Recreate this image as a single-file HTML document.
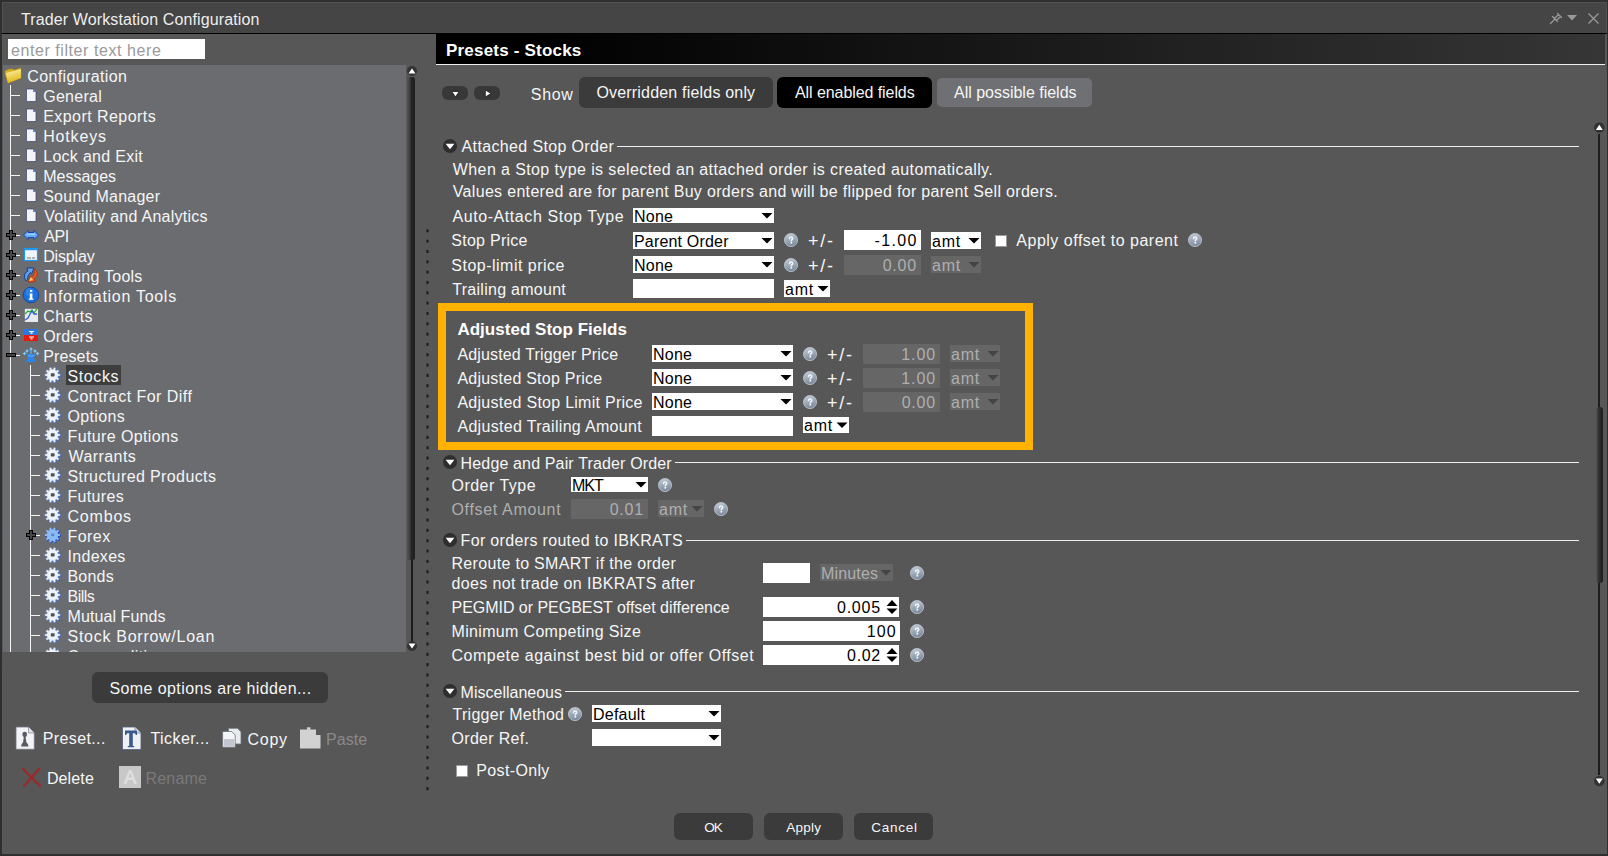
<!DOCTYPE html>
<html><head><meta charset="utf-8"><title>Trader Workstation Configuration</title>
<style>
html,body{margin:0;padding:0;width:1608px;height:856px;overflow:hidden;background:#2f2f2f}
body>div,body>svg{position:absolute}
.t{position:absolute;white-space:pre;font-family:"Liberation Sans",sans-serif;font-size:16px;line-height:20px}
svg{overflow:visible}
</style></head><body>
<div style="left:0px;top:0px;width:1608px;height:856px;background:#2f2f2f"></div>
<div style="left:2px;top:2px;width:1605px;height:852px;background:#575757;border-left:1px solid #5a5a5a;box-sizing:border-box"></div>
<div style="left:2px;top:2px;width:1605px;height:31px;background:#454545;border-top:1px solid #525252;border-left:1px solid #525252;border-right:1px solid #525252;box-sizing:border-box"></div>
<div style="left:2px;top:33px;width:1605px;height:1px;background:#000"></div>
<svg style="left:1545px;top:8px" width="60" height="22" viewBox="1545 8 60 22"><g stroke="#9a9a9a" stroke-width="1.3" fill="none" stroke-linecap="round"><line x1="1550.5" y1="23.5" x2="1555" y2="19"/><path d="M1552.5 16.5 L1557.5 21.5 M1554.5 18.5 L1558.5 14.5 M1556.5 20.5 L1560.5 16.5 M1557.5 13.5 L1561.5 17.5"/></g><path d="M1567 15 L1577 15 L1572 20.5 Z" fill="#9a9a9a"/><g stroke="#9a9a9a" stroke-width="1.2"><line x1="1588.5" y1="13.5" x2="1598.5" y2="23.5"/><line x1="1598.5" y1="13.5" x2="1588.5" y2="23.5"/></g></svg>
<div style="left:8px;top:39px;width:197px;height:20px;background:#fff"></div>
<div style="left:3px;top:65px;width:403px;height:587px;background:#6b6c70"></div>
<div style="left:10px;top:85px;width:1px;height:567px;background:#f4f4f4"></div>
<div style="left:30px;top:365px;width:1px;height:287px;background:#f4f4f4"></div>
<div style="left:10px;top:95px;width:10px;height:1px;background:#f4f4f4"></div>
<div style="left:10px;top:115px;width:10px;height:1px;background:#f4f4f4"></div>
<div style="left:10px;top:135px;width:10px;height:1px;background:#f4f4f4"></div>
<div style="left:10px;top:155px;width:10px;height:1px;background:#f4f4f4"></div>
<div style="left:10px;top:175px;width:10px;height:1px;background:#f4f4f4"></div>
<div style="left:10px;top:195px;width:10px;height:1px;background:#f4f4f4"></div>
<div style="left:10px;top:215px;width:10px;height:1px;background:#f4f4f4"></div>
<div style="left:10px;top:235px;width:10px;height:1px;background:#f4f4f4"></div>
<div style="left:10px;top:255px;width:10px;height:1px;background:#f4f4f4"></div>
<div style="left:10px;top:275px;width:10px;height:1px;background:#f4f4f4"></div>
<div style="left:10px;top:295px;width:10px;height:1px;background:#f4f4f4"></div>
<div style="left:10px;top:315px;width:10px;height:1px;background:#f4f4f4"></div>
<div style="left:10px;top:335px;width:10px;height:1px;background:#f4f4f4"></div>
<div style="left:10px;top:355px;width:10px;height:1px;background:#f4f4f4"></div>
<div style="left:30px;top:375px;width:10px;height:1px;background:#f4f4f4"></div>
<div style="left:66px;top:365px;width:55px;height:20px;background:#3d3d3d"></div>
<div style="left:30px;top:395px;width:10px;height:1px;background:#f4f4f4"></div>
<div style="left:30px;top:415px;width:10px;height:1px;background:#f4f4f4"></div>
<div style="left:30px;top:435px;width:10px;height:1px;background:#f4f4f4"></div>
<div style="left:30px;top:455px;width:10px;height:1px;background:#f4f4f4"></div>
<div style="left:30px;top:475px;width:10px;height:1px;background:#f4f4f4"></div>
<div style="left:30px;top:495px;width:10px;height:1px;background:#f4f4f4"></div>
<div style="left:30px;top:515px;width:10px;height:1px;background:#f4f4f4"></div>
<div style="left:30px;top:535px;width:10px;height:1px;background:#f4f4f4"></div>
<div style="left:30px;top:555px;width:10px;height:1px;background:#f4f4f4"></div>
<div style="left:30px;top:575px;width:10px;height:1px;background:#f4f4f4"></div>
<div style="left:30px;top:595px;width:10px;height:1px;background:#f4f4f4"></div>
<div style="left:30px;top:615px;width:10px;height:1px;background:#f4f4f4"></div>
<div style="left:30px;top:635px;width:10px;height:1px;background:#f4f4f4"></div>
<div style="left:30px;top:655px;width:10px;height:1px;background:#f4f4f4"></div>
<svg style="left:0;top:0" width="440" height="660" viewBox="0 0 440 660"><defs><clipPath id="tc"><rect x="2" y="65" width="404" height="587"/></clipPath></defs><g clip-path="url(#tc)"><defs><linearGradient id="fg" x1="0" y1="0" x2="0.3" y2="1"><stop offset="0" stop-color="#fff6b0"/><stop offset="1" stop-color="#e0b818"/></linearGradient></defs><path d="M5 71 L9 69 L13 69 L14 70 L21 68 L21 78 L8 83 L5 74 Z" fill="#d8b020" stroke="#a88a10" stroke-width="0.6"/><path d="M6 73 L21 69 L21 78 L8 83 Z" fill="url(#fg)"/><path d="M26.5 89 L33 89 L36 92 L36 101.5 L26.5 101.5 Z" fill="#f2f6fb" stroke="#3a4070" stroke-width="0.7"/><path d="M33 89 L33 92 L36 92 Z" fill="#6a90d0"/><path d="M26.5 109 L33 109 L36 112 L36 121.5 L26.5 121.5 Z" fill="#f2f6fb" stroke="#3a4070" stroke-width="0.7"/><path d="M33 109 L33 112 L36 112 Z" fill="#6a90d0"/><path d="M26.5 129 L33 129 L36 132 L36 141.5 L26.5 141.5 Z" fill="#f2f6fb" stroke="#3a4070" stroke-width="0.7"/><path d="M33 129 L33 132 L36 132 Z" fill="#6a90d0"/><path d="M26.5 149 L33 149 L36 152 L36 161.5 L26.5 161.5 Z" fill="#f2f6fb" stroke="#3a4070" stroke-width="0.7"/><path d="M33 149 L33 152 L36 152 Z" fill="#6a90d0"/><path d="M26.5 169 L33 169 L36 172 L36 181.5 L26.5 181.5 Z" fill="#f2f6fb" stroke="#3a4070" stroke-width="0.7"/><path d="M33 169 L33 172 L36 172 Z" fill="#6a90d0"/><path d="M26.5 189 L33 189 L36 192 L36 201.5 L26.5 201.5 Z" fill="#f2f6fb" stroke="#3a4070" stroke-width="0.7"/><path d="M33 189 L33 192 L36 192 Z" fill="#6a90d0"/><path d="M26.5 209 L33 209 L36 212 L36 221.5 L26.5 221.5 Z" fill="#f2f6fb" stroke="#3a4070" stroke-width="0.7"/><path d="M33 209 L33 212 L36 212 Z" fill="#6a90d0"/><g shape-rendering="crispEdges"><rect x="9" y="230" width="4" height="10" fill="#000"/><rect x="6" y="233" width="10" height="4" fill="#000"/><rect x="10" y="231" width="2" height="8" fill="#464646"/><rect x="7" y="234" width="8" height="2" fill="#464646"/></g><path d="M23.5 235 L28 230.5 L28 232.5 L34 232.5 L34 230.5 L38.5 235 L34 239.5 L34 237.5 L28 237.5 L28 239.5 Z" fill="#6aaef2" stroke="#1444b8" stroke-width="1"/><rect x="27" y="233.5" width="8" height="1.2" fill="#a8d4ff"/><g shape-rendering="crispEdges"><rect x="9" y="250" width="4" height="10" fill="#000"/><rect x="6" y="253" width="10" height="4" fill="#000"/><rect x="10" y="251" width="2" height="8" fill="#464646"/><rect x="7" y="254" width="8" height="2" fill="#464646"/></g><rect x="24.5" y="248.5" width="13" height="12" fill="#f0f3fa" stroke="#1e98f0" stroke-width="1.2"/><rect x="24" y="248" width="14" height="2.2" fill="#1e98f0"/><path d="M27 258 H31 M32 258 H35" stroke="#666" stroke-width="0.9"/><g shape-rendering="crispEdges"><rect x="9" y="270" width="4" height="10" fill="#000"/><rect x="6" y="273" width="10" height="4" fill="#000"/><rect x="10" y="271" width="2" height="8" fill="#464646"/><rect x="7" y="274" width="8" height="2" fill="#464646"/></g><path d="M26 281 Q22 274 28 271 L27 268 L34 268 L31.5 274 L30.5 272.5 Q27 275 27.5 280 Z" fill="#5aa4f0" stroke="#10389a" stroke-width="0.9"/><path d="M35 269 Q40 275 34 278.5 L35.5 281.5 L28 282 L30.5 276 L32 277.2 Q35.5 275 34 269.5 Z" fill="#f25a18" stroke="#b02a00" stroke-width="0.7"/><path d="M29 281 L31 277 L33 280 Z" fill="#ffd070"/><g shape-rendering="crispEdges"><rect x="9" y="290" width="4" height="10" fill="#000"/><rect x="6" y="293" width="10" height="4" fill="#000"/><rect x="10" y="291" width="2" height="8" fill="#464646"/><rect x="7" y="294" width="8" height="2" fill="#464646"/></g><circle cx="31" cy="295" r="7.8" fill="#1a70e0" stroke="#0a3a90" stroke-width="0.7"/><circle cx="29.5" cy="292" r="4" fill="#3a8ef0" opacity="0.6"/><rect x="29.8" y="293.5" width="2.6" height="6" fill="#fff"/><rect x="28.8" y="298.5" width="4.6" height="1.3" fill="#fff"/><rect x="30" y="290" width="2.2" height="1.8" fill="#fff"/><g shape-rendering="crispEdges"><rect x="9" y="310" width="4" height="10" fill="#000"/><rect x="6" y="313" width="10" height="4" fill="#000"/><rect x="10" y="311" width="2" height="8" fill="#464646"/><rect x="7" y="314" width="8" height="2" fill="#464646"/></g><rect x="24.3" y="308.3" width="14" height="14" fill="#e6e8f2" stroke="#555" stroke-width="0.6"/><path d="M25 314 L28 311 L30 312 L32 310 L34 313 L37 309" stroke="#30b030" stroke-width="1.3" fill="none"/><path d="M25 320 L28 318 L30 314 L32 311 L34 314 L37 314" stroke="#2a60d0" stroke-width="1.3" fill="none"/><g shape-rendering="crispEdges"><rect x="9" y="330" width="4" height="10" fill="#000"/><rect x="6" y="333" width="10" height="4" fill="#000"/><rect x="10" y="331" width="2" height="8" fill="#464646"/><rect x="7" y="334" width="8" height="2" fill="#464646"/></g><rect x="24" y="329" width="14" height="6" fill="#2a78e0"/><rect x="24" y="335" width="14" height="6" fill="#e81a10"/><rect x="29" y="331" width="5" height="1" fill="#fff"/><rect x="30.5" y="332" width="2" height="2" fill="#cfe0ff"/><rect x="29" y="336.5" width="5" height="1" fill="#fff"/><rect x="30.5" y="337.5" width="2" height="2" fill="#ffd0c0"/><rect x="6" y="353" width="10" height="4" fill="#000"/><rect x="7" y="354" width="8" height="2" fill="#444"/><path d="M26 362 Q26 360 28.5 358.5 Q27.5 356 26 354 L36 354 Q34.5 356 33.5 358.5 Q36 360 36 362 Z" fill="#2a86ec"/><path d="M28 355.5 Q31 357 34 355.5" stroke="#6cc4ff" stroke-width="0.8" fill="none"/><path d="M31 347 L31.8 348.2 L33 349 L31.8 349.8 L31 351 L30.2 349.8 L29 349 L30.2 348.2 Z" fill="#7acbf8"/><path d="M27 349 L27.8 350.2 L29 351 L27.8 351.8 L27 353 L26.2 351.8 L25 351 L26.2 350.2 Z" fill="#7acbf8"/><path d="M35 349 L35.8 350.2 L37 351 L35.8 351.8 L35 353 L34.2 351.8 L33 351 L34.2 350.2 Z" fill="#7acbf8"/><path d="M24.5 351.5 L25.3 352.7 L26.5 353.5 L25.3 354.3 L24.5 355.5 L23.7 354.3 L22.5 353.5 L23.7 352.7 Z" fill="#7acbf8"/><path d="M37.5 351.5 L38.3 352.7 L39.5 353.5 L38.3 354.3 L37.5 355.5 L36.7 354.3 L35.5 353.5 L36.7 352.7 Z" fill="#7acbf8"/><rect x="30.3" y="350" width="1.4" height="4" fill="#5ab0f0"/><path d="M54.04 369.85 L54.76 368.04 L56.62 368.64 L56.14 370.53 L57.34 371.40 L58.99 370.36 L60.14 371.94 L58.64 373.19 L59.10 374.59 L61.04 374.72 L61.04 376.68 L59.10 376.81 L58.64 378.21 L60.14 379.46 L58.99 381.04 L57.34 380.00 L56.14 380.87 L56.62 382.76 L54.76 383.36 L54.04 381.55 L52.56 381.55 L51.84 383.36 L49.98 382.76 L50.46 380.87 L49.26 380.00 L47.61 381.04 L46.46 379.46 L47.96 378.21 L47.50 376.81 L45.56 376.68 L45.56 374.72 L47.50 374.59 L47.96 373.19 L46.46 371.94 L47.61 370.36 L49.26 371.40 L50.46 370.53 L49.98 368.64 L51.84 368.04 L52.56 369.85Z" fill="#3a66c8"/><path d="M53.21 369.34 L53.92 367.53 L55.74 368.12 L55.25 370.01 L56.40 370.84 L58.04 369.80 L59.16 371.34 L57.66 372.57 L58.10 373.93 L60.04 374.05 L60.04 375.95 L58.10 376.07 L57.66 377.43 L59.16 378.66 L58.04 380.20 L56.40 379.16 L55.25 379.99 L55.74 381.88 L53.92 382.47 L53.21 380.66 L51.79 380.66 L51.08 382.47 L49.26 381.88 L49.75 379.99 L48.60 379.16 L46.96 380.20 L45.84 378.66 L47.34 377.43 L46.90 376.07 L44.96 375.95 L44.96 374.05 L46.90 373.93 L47.34 372.57 L45.84 371.34 L46.96 369.80 L48.60 370.84 L49.75 370.01 L49.26 368.12 L51.08 367.53 L51.79 369.34Z" fill="#eef3fa" stroke="#9aa8c0" stroke-width="0.4"/><rect x="50.8" y="373.2" width="3.8" height="3.2" rx="0.6" fill="#4a4f58"/><path d="M54.04 389.85 L54.76 388.04 L56.62 388.64 L56.14 390.53 L57.34 391.40 L58.99 390.36 L60.14 391.94 L58.64 393.19 L59.10 394.59 L61.04 394.72 L61.04 396.68 L59.10 396.81 L58.64 398.21 L60.14 399.46 L58.99 401.04 L57.34 400.00 L56.14 400.87 L56.62 402.76 L54.76 403.36 L54.04 401.55 L52.56 401.55 L51.84 403.36 L49.98 402.76 L50.46 400.87 L49.26 400.00 L47.61 401.04 L46.46 399.46 L47.96 398.21 L47.50 396.81 L45.56 396.68 L45.56 394.72 L47.50 394.59 L47.96 393.19 L46.46 391.94 L47.61 390.36 L49.26 391.40 L50.46 390.53 L49.98 388.64 L51.84 388.04 L52.56 389.85Z" fill="#3a66c8"/><path d="M53.21 389.34 L53.92 387.53 L55.74 388.12 L55.25 390.01 L56.40 390.84 L58.04 389.80 L59.16 391.34 L57.66 392.57 L58.10 393.93 L60.04 394.05 L60.04 395.95 L58.10 396.07 L57.66 397.43 L59.16 398.66 L58.04 400.20 L56.40 399.16 L55.25 399.99 L55.74 401.88 L53.92 402.47 L53.21 400.66 L51.79 400.66 L51.08 402.47 L49.26 401.88 L49.75 399.99 L48.60 399.16 L46.96 400.20 L45.84 398.66 L47.34 397.43 L46.90 396.07 L44.96 395.95 L44.96 394.05 L46.90 393.93 L47.34 392.57 L45.84 391.34 L46.96 389.80 L48.60 390.84 L49.75 390.01 L49.26 388.12 L51.08 387.53 L51.79 389.34Z" fill="#eef3fa" stroke="#9aa8c0" stroke-width="0.4"/><rect x="50.8" y="393.2" width="3.8" height="3.2" rx="0.6" fill="#4a4f58"/><path d="M54.04 409.85 L54.76 408.04 L56.62 408.64 L56.14 410.53 L57.34 411.40 L58.99 410.36 L60.14 411.94 L58.64 413.19 L59.10 414.59 L61.04 414.72 L61.04 416.68 L59.10 416.81 L58.64 418.21 L60.14 419.46 L58.99 421.04 L57.34 420.00 L56.14 420.87 L56.62 422.76 L54.76 423.36 L54.04 421.55 L52.56 421.55 L51.84 423.36 L49.98 422.76 L50.46 420.87 L49.26 420.00 L47.61 421.04 L46.46 419.46 L47.96 418.21 L47.50 416.81 L45.56 416.68 L45.56 414.72 L47.50 414.59 L47.96 413.19 L46.46 411.94 L47.61 410.36 L49.26 411.40 L50.46 410.53 L49.98 408.64 L51.84 408.04 L52.56 409.85Z" fill="#3a66c8"/><path d="M53.21 409.34 L53.92 407.53 L55.74 408.12 L55.25 410.01 L56.40 410.84 L58.04 409.80 L59.16 411.34 L57.66 412.57 L58.10 413.93 L60.04 414.05 L60.04 415.95 L58.10 416.07 L57.66 417.43 L59.16 418.66 L58.04 420.20 L56.40 419.16 L55.25 419.99 L55.74 421.88 L53.92 422.47 L53.21 420.66 L51.79 420.66 L51.08 422.47 L49.26 421.88 L49.75 419.99 L48.60 419.16 L46.96 420.20 L45.84 418.66 L47.34 417.43 L46.90 416.07 L44.96 415.95 L44.96 414.05 L46.90 413.93 L47.34 412.57 L45.84 411.34 L46.96 409.80 L48.60 410.84 L49.75 410.01 L49.26 408.12 L51.08 407.53 L51.79 409.34Z" fill="#eef3fa" stroke="#9aa8c0" stroke-width="0.4"/><rect x="50.8" y="413.2" width="3.8" height="3.2" rx="0.6" fill="#4a4f58"/><path d="M54.04 429.85 L54.76 428.04 L56.62 428.64 L56.14 430.53 L57.34 431.40 L58.99 430.36 L60.14 431.94 L58.64 433.19 L59.10 434.59 L61.04 434.72 L61.04 436.68 L59.10 436.81 L58.64 438.21 L60.14 439.46 L58.99 441.04 L57.34 440.00 L56.14 440.87 L56.62 442.76 L54.76 443.36 L54.04 441.55 L52.56 441.55 L51.84 443.36 L49.98 442.76 L50.46 440.87 L49.26 440.00 L47.61 441.04 L46.46 439.46 L47.96 438.21 L47.50 436.81 L45.56 436.68 L45.56 434.72 L47.50 434.59 L47.96 433.19 L46.46 431.94 L47.61 430.36 L49.26 431.40 L50.46 430.53 L49.98 428.64 L51.84 428.04 L52.56 429.85Z" fill="#3a66c8"/><path d="M53.21 429.34 L53.92 427.53 L55.74 428.12 L55.25 430.01 L56.40 430.84 L58.04 429.80 L59.16 431.34 L57.66 432.57 L58.10 433.93 L60.04 434.05 L60.04 435.95 L58.10 436.07 L57.66 437.43 L59.16 438.66 L58.04 440.20 L56.40 439.16 L55.25 439.99 L55.74 441.88 L53.92 442.47 L53.21 440.66 L51.79 440.66 L51.08 442.47 L49.26 441.88 L49.75 439.99 L48.60 439.16 L46.96 440.20 L45.84 438.66 L47.34 437.43 L46.90 436.07 L44.96 435.95 L44.96 434.05 L46.90 433.93 L47.34 432.57 L45.84 431.34 L46.96 429.80 L48.60 430.84 L49.75 430.01 L49.26 428.12 L51.08 427.53 L51.79 429.34Z" fill="#eef3fa" stroke="#9aa8c0" stroke-width="0.4"/><rect x="50.8" y="433.2" width="3.8" height="3.2" rx="0.6" fill="#4a4f58"/><path d="M54.04 449.85 L54.76 448.04 L56.62 448.64 L56.14 450.53 L57.34 451.40 L58.99 450.36 L60.14 451.94 L58.64 453.19 L59.10 454.59 L61.04 454.72 L61.04 456.68 L59.10 456.81 L58.64 458.21 L60.14 459.46 L58.99 461.04 L57.34 460.00 L56.14 460.87 L56.62 462.76 L54.76 463.36 L54.04 461.55 L52.56 461.55 L51.84 463.36 L49.98 462.76 L50.46 460.87 L49.26 460.00 L47.61 461.04 L46.46 459.46 L47.96 458.21 L47.50 456.81 L45.56 456.68 L45.56 454.72 L47.50 454.59 L47.96 453.19 L46.46 451.94 L47.61 450.36 L49.26 451.40 L50.46 450.53 L49.98 448.64 L51.84 448.04 L52.56 449.85Z" fill="#3a66c8"/><path d="M53.21 449.34 L53.92 447.53 L55.74 448.12 L55.25 450.01 L56.40 450.84 L58.04 449.80 L59.16 451.34 L57.66 452.57 L58.10 453.93 L60.04 454.05 L60.04 455.95 L58.10 456.07 L57.66 457.43 L59.16 458.66 L58.04 460.20 L56.40 459.16 L55.25 459.99 L55.74 461.88 L53.92 462.47 L53.21 460.66 L51.79 460.66 L51.08 462.47 L49.26 461.88 L49.75 459.99 L48.60 459.16 L46.96 460.20 L45.84 458.66 L47.34 457.43 L46.90 456.07 L44.96 455.95 L44.96 454.05 L46.90 453.93 L47.34 452.57 L45.84 451.34 L46.96 449.80 L48.60 450.84 L49.75 450.01 L49.26 448.12 L51.08 447.53 L51.79 449.34Z" fill="#eef3fa" stroke="#9aa8c0" stroke-width="0.4"/><rect x="50.8" y="453.2" width="3.8" height="3.2" rx="0.6" fill="#4a4f58"/><path d="M54.04 469.85 L54.76 468.04 L56.62 468.64 L56.14 470.53 L57.34 471.40 L58.99 470.36 L60.14 471.94 L58.64 473.19 L59.10 474.59 L61.04 474.72 L61.04 476.68 L59.10 476.81 L58.64 478.21 L60.14 479.46 L58.99 481.04 L57.34 480.00 L56.14 480.87 L56.62 482.76 L54.76 483.36 L54.04 481.55 L52.56 481.55 L51.84 483.36 L49.98 482.76 L50.46 480.87 L49.26 480.00 L47.61 481.04 L46.46 479.46 L47.96 478.21 L47.50 476.81 L45.56 476.68 L45.56 474.72 L47.50 474.59 L47.96 473.19 L46.46 471.94 L47.61 470.36 L49.26 471.40 L50.46 470.53 L49.98 468.64 L51.84 468.04 L52.56 469.85Z" fill="#3a66c8"/><path d="M53.21 469.34 L53.92 467.53 L55.74 468.12 L55.25 470.01 L56.40 470.84 L58.04 469.80 L59.16 471.34 L57.66 472.57 L58.10 473.93 L60.04 474.05 L60.04 475.95 L58.10 476.07 L57.66 477.43 L59.16 478.66 L58.04 480.20 L56.40 479.16 L55.25 479.99 L55.74 481.88 L53.92 482.47 L53.21 480.66 L51.79 480.66 L51.08 482.47 L49.26 481.88 L49.75 479.99 L48.60 479.16 L46.96 480.20 L45.84 478.66 L47.34 477.43 L46.90 476.07 L44.96 475.95 L44.96 474.05 L46.90 473.93 L47.34 472.57 L45.84 471.34 L46.96 469.80 L48.60 470.84 L49.75 470.01 L49.26 468.12 L51.08 467.53 L51.79 469.34Z" fill="#eef3fa" stroke="#9aa8c0" stroke-width="0.4"/><rect x="50.8" y="473.2" width="3.8" height="3.2" rx="0.6" fill="#4a4f58"/><path d="M54.04 489.85 L54.76 488.04 L56.62 488.64 L56.14 490.53 L57.34 491.40 L58.99 490.36 L60.14 491.94 L58.64 493.19 L59.10 494.59 L61.04 494.72 L61.04 496.68 L59.10 496.81 L58.64 498.21 L60.14 499.46 L58.99 501.04 L57.34 500.00 L56.14 500.87 L56.62 502.76 L54.76 503.36 L54.04 501.55 L52.56 501.55 L51.84 503.36 L49.98 502.76 L50.46 500.87 L49.26 500.00 L47.61 501.04 L46.46 499.46 L47.96 498.21 L47.50 496.81 L45.56 496.68 L45.56 494.72 L47.50 494.59 L47.96 493.19 L46.46 491.94 L47.61 490.36 L49.26 491.40 L50.46 490.53 L49.98 488.64 L51.84 488.04 L52.56 489.85Z" fill="#3a66c8"/><path d="M53.21 489.34 L53.92 487.53 L55.74 488.12 L55.25 490.01 L56.40 490.84 L58.04 489.80 L59.16 491.34 L57.66 492.57 L58.10 493.93 L60.04 494.05 L60.04 495.95 L58.10 496.07 L57.66 497.43 L59.16 498.66 L58.04 500.20 L56.40 499.16 L55.25 499.99 L55.74 501.88 L53.92 502.47 L53.21 500.66 L51.79 500.66 L51.08 502.47 L49.26 501.88 L49.75 499.99 L48.60 499.16 L46.96 500.20 L45.84 498.66 L47.34 497.43 L46.90 496.07 L44.96 495.95 L44.96 494.05 L46.90 493.93 L47.34 492.57 L45.84 491.34 L46.96 489.80 L48.60 490.84 L49.75 490.01 L49.26 488.12 L51.08 487.53 L51.79 489.34Z" fill="#eef3fa" stroke="#9aa8c0" stroke-width="0.4"/><rect x="50.8" y="493.2" width="3.8" height="3.2" rx="0.6" fill="#4a4f58"/><path d="M54.04 509.85 L54.76 508.04 L56.62 508.64 L56.14 510.53 L57.34 511.40 L58.99 510.36 L60.14 511.94 L58.64 513.19 L59.10 514.59 L61.04 514.72 L61.04 516.68 L59.10 516.81 L58.64 518.21 L60.14 519.46 L58.99 521.04 L57.34 520.00 L56.14 520.87 L56.62 522.76 L54.76 523.36 L54.04 521.55 L52.56 521.55 L51.84 523.36 L49.98 522.76 L50.46 520.87 L49.26 520.00 L47.61 521.04 L46.46 519.46 L47.96 518.21 L47.50 516.81 L45.56 516.68 L45.56 514.72 L47.50 514.59 L47.96 513.19 L46.46 511.94 L47.61 510.36 L49.26 511.40 L50.46 510.53 L49.98 508.64 L51.84 508.04 L52.56 509.85Z" fill="#3a66c8"/><path d="M53.21 509.34 L53.92 507.53 L55.74 508.12 L55.25 510.01 L56.40 510.84 L58.04 509.80 L59.16 511.34 L57.66 512.57 L58.10 513.93 L60.04 514.05 L60.04 515.95 L58.10 516.07 L57.66 517.43 L59.16 518.66 L58.04 520.20 L56.40 519.16 L55.25 519.99 L55.74 521.88 L53.92 522.47 L53.21 520.66 L51.79 520.66 L51.08 522.47 L49.26 521.88 L49.75 519.99 L48.60 519.16 L46.96 520.20 L45.84 518.66 L47.34 517.43 L46.90 516.07 L44.96 515.95 L44.96 514.05 L46.90 513.93 L47.34 512.57 L45.84 511.34 L46.96 509.80 L48.60 510.84 L49.75 510.01 L49.26 508.12 L51.08 507.53 L51.79 509.34Z" fill="#eef3fa" stroke="#9aa8c0" stroke-width="0.4"/><rect x="50.8" y="513.2" width="3.8" height="3.2" rx="0.6" fill="#4a4f58"/><path d="M27 531 H31 V534" fill="none"/><g shape-rendering="crispEdges"><rect x="29" y="530" width="4" height="10" fill="#000"/><rect x="26" y="533" width="10" height="4" fill="#000"/><rect x="30" y="531" width="2" height="8" fill="#464646"/><rect x="27" y="534" width="8" height="2" fill="#464646"/></g><path d="M53.95 529.65 L54.68 527.84 L56.56 528.45 L56.09 530.34 L57.31 531.23 L58.96 530.19 L60.12 531.79 L58.63 533.05 L59.09 534.48 L61.04 534.61 L61.04 536.59 L59.09 536.72 L58.63 538.15 L60.12 539.41 L58.96 541.01 L57.31 539.97 L56.09 540.86 L56.56 542.75 L54.68 543.36 L53.95 541.55 L52.45 541.55 L51.72 543.36 L49.84 542.75 L50.31 540.86 L49.09 539.97 L47.44 541.01 L46.28 539.41 L47.77 538.15 L47.31 536.72 L45.36 536.59 L45.36 534.61 L47.31 534.48 L47.77 533.05 L46.28 531.79 L47.44 530.19 L49.09 531.23 L50.31 530.34 L49.84 528.45 L51.72 527.84 L52.45 529.65Z" fill="#1a48c8"/><path d="M53.21 529.34 L53.92 527.53 L55.74 528.12 L55.25 530.01 L56.40 530.84 L58.04 529.80 L59.16 531.34 L57.66 532.57 L58.10 533.93 L60.04 534.05 L60.04 535.95 L58.10 536.07 L57.66 537.43 L59.16 538.66 L58.04 540.20 L56.40 539.16 L55.25 539.99 L55.74 541.88 L53.92 542.47 L53.21 540.66 L51.79 540.66 L51.08 542.47 L49.26 541.88 L49.75 539.99 L48.60 539.16 L46.96 540.20 L45.84 538.66 L47.34 537.43 L46.90 536.07 L44.96 535.95 L44.96 534.05 L46.90 533.93 L47.34 532.57 L45.84 531.34 L46.96 529.80 L48.60 530.84 L49.75 530.01 L49.26 528.12 L51.08 527.53 L51.79 529.34Z" fill="#8cbaf6"/><rect x="51.2" y="533.5" width="3" height="2.6" fill="#5a88d0"/><path d="M54.04 549.85 L54.76 548.04 L56.62 548.64 L56.14 550.53 L57.34 551.40 L58.99 550.36 L60.14 551.94 L58.64 553.19 L59.10 554.59 L61.04 554.72 L61.04 556.68 L59.10 556.81 L58.64 558.21 L60.14 559.46 L58.99 561.04 L57.34 560.00 L56.14 560.87 L56.62 562.76 L54.76 563.36 L54.04 561.55 L52.56 561.55 L51.84 563.36 L49.98 562.76 L50.46 560.87 L49.26 560.00 L47.61 561.04 L46.46 559.46 L47.96 558.21 L47.50 556.81 L45.56 556.68 L45.56 554.72 L47.50 554.59 L47.96 553.19 L46.46 551.94 L47.61 550.36 L49.26 551.40 L50.46 550.53 L49.98 548.64 L51.84 548.04 L52.56 549.85Z" fill="#3a66c8"/><path d="M53.21 549.34 L53.92 547.53 L55.74 548.12 L55.25 550.01 L56.40 550.84 L58.04 549.80 L59.16 551.34 L57.66 552.57 L58.10 553.93 L60.04 554.05 L60.04 555.95 L58.10 556.07 L57.66 557.43 L59.16 558.66 L58.04 560.20 L56.40 559.16 L55.25 559.99 L55.74 561.88 L53.92 562.47 L53.21 560.66 L51.79 560.66 L51.08 562.47 L49.26 561.88 L49.75 559.99 L48.60 559.16 L46.96 560.20 L45.84 558.66 L47.34 557.43 L46.90 556.07 L44.96 555.95 L44.96 554.05 L46.90 553.93 L47.34 552.57 L45.84 551.34 L46.96 549.80 L48.60 550.84 L49.75 550.01 L49.26 548.12 L51.08 547.53 L51.79 549.34Z" fill="#eef3fa" stroke="#9aa8c0" stroke-width="0.4"/><rect x="50.8" y="553.2" width="3.8" height="3.2" rx="0.6" fill="#4a4f58"/><path d="M54.04 569.85 L54.76 568.04 L56.62 568.64 L56.14 570.53 L57.34 571.40 L58.99 570.36 L60.14 571.94 L58.64 573.19 L59.10 574.59 L61.04 574.72 L61.04 576.68 L59.10 576.81 L58.64 578.21 L60.14 579.46 L58.99 581.04 L57.34 580.00 L56.14 580.87 L56.62 582.76 L54.76 583.36 L54.04 581.55 L52.56 581.55 L51.84 583.36 L49.98 582.76 L50.46 580.87 L49.26 580.00 L47.61 581.04 L46.46 579.46 L47.96 578.21 L47.50 576.81 L45.56 576.68 L45.56 574.72 L47.50 574.59 L47.96 573.19 L46.46 571.94 L47.61 570.36 L49.26 571.40 L50.46 570.53 L49.98 568.64 L51.84 568.04 L52.56 569.85Z" fill="#3a66c8"/><path d="M53.21 569.34 L53.92 567.53 L55.74 568.12 L55.25 570.01 L56.40 570.84 L58.04 569.80 L59.16 571.34 L57.66 572.57 L58.10 573.93 L60.04 574.05 L60.04 575.95 L58.10 576.07 L57.66 577.43 L59.16 578.66 L58.04 580.20 L56.40 579.16 L55.25 579.99 L55.74 581.88 L53.92 582.47 L53.21 580.66 L51.79 580.66 L51.08 582.47 L49.26 581.88 L49.75 579.99 L48.60 579.16 L46.96 580.20 L45.84 578.66 L47.34 577.43 L46.90 576.07 L44.96 575.95 L44.96 574.05 L46.90 573.93 L47.34 572.57 L45.84 571.34 L46.96 569.80 L48.60 570.84 L49.75 570.01 L49.26 568.12 L51.08 567.53 L51.79 569.34Z" fill="#eef3fa" stroke="#9aa8c0" stroke-width="0.4"/><rect x="50.8" y="573.2" width="3.8" height="3.2" rx="0.6" fill="#4a4f58"/><path d="M54.04 589.85 L54.76 588.04 L56.62 588.64 L56.14 590.53 L57.34 591.40 L58.99 590.36 L60.14 591.94 L58.64 593.19 L59.10 594.59 L61.04 594.72 L61.04 596.68 L59.10 596.81 L58.64 598.21 L60.14 599.46 L58.99 601.04 L57.34 600.00 L56.14 600.87 L56.62 602.76 L54.76 603.36 L54.04 601.55 L52.56 601.55 L51.84 603.36 L49.98 602.76 L50.46 600.87 L49.26 600.00 L47.61 601.04 L46.46 599.46 L47.96 598.21 L47.50 596.81 L45.56 596.68 L45.56 594.72 L47.50 594.59 L47.96 593.19 L46.46 591.94 L47.61 590.36 L49.26 591.40 L50.46 590.53 L49.98 588.64 L51.84 588.04 L52.56 589.85Z" fill="#3a66c8"/><path d="M53.21 589.34 L53.92 587.53 L55.74 588.12 L55.25 590.01 L56.40 590.84 L58.04 589.80 L59.16 591.34 L57.66 592.57 L58.10 593.93 L60.04 594.05 L60.04 595.95 L58.10 596.07 L57.66 597.43 L59.16 598.66 L58.04 600.20 L56.40 599.16 L55.25 599.99 L55.74 601.88 L53.92 602.47 L53.21 600.66 L51.79 600.66 L51.08 602.47 L49.26 601.88 L49.75 599.99 L48.60 599.16 L46.96 600.20 L45.84 598.66 L47.34 597.43 L46.90 596.07 L44.96 595.95 L44.96 594.05 L46.90 593.93 L47.34 592.57 L45.84 591.34 L46.96 589.80 L48.60 590.84 L49.75 590.01 L49.26 588.12 L51.08 587.53 L51.79 589.34Z" fill="#eef3fa" stroke="#9aa8c0" stroke-width="0.4"/><rect x="50.8" y="593.2" width="3.8" height="3.2" rx="0.6" fill="#4a4f58"/><path d="M54.04 609.85 L54.76 608.04 L56.62 608.64 L56.14 610.53 L57.34 611.40 L58.99 610.36 L60.14 611.94 L58.64 613.19 L59.10 614.59 L61.04 614.72 L61.04 616.68 L59.10 616.81 L58.64 618.21 L60.14 619.46 L58.99 621.04 L57.34 620.00 L56.14 620.87 L56.62 622.76 L54.76 623.36 L54.04 621.55 L52.56 621.55 L51.84 623.36 L49.98 622.76 L50.46 620.87 L49.26 620.00 L47.61 621.04 L46.46 619.46 L47.96 618.21 L47.50 616.81 L45.56 616.68 L45.56 614.72 L47.50 614.59 L47.96 613.19 L46.46 611.94 L47.61 610.36 L49.26 611.40 L50.46 610.53 L49.98 608.64 L51.84 608.04 L52.56 609.85Z" fill="#3a66c8"/><path d="M53.21 609.34 L53.92 607.53 L55.74 608.12 L55.25 610.01 L56.40 610.84 L58.04 609.80 L59.16 611.34 L57.66 612.57 L58.10 613.93 L60.04 614.05 L60.04 615.95 L58.10 616.07 L57.66 617.43 L59.16 618.66 L58.04 620.20 L56.40 619.16 L55.25 619.99 L55.74 621.88 L53.92 622.47 L53.21 620.66 L51.79 620.66 L51.08 622.47 L49.26 621.88 L49.75 619.99 L48.60 619.16 L46.96 620.20 L45.84 618.66 L47.34 617.43 L46.90 616.07 L44.96 615.95 L44.96 614.05 L46.90 613.93 L47.34 612.57 L45.84 611.34 L46.96 609.80 L48.60 610.84 L49.75 610.01 L49.26 608.12 L51.08 607.53 L51.79 609.34Z" fill="#eef3fa" stroke="#9aa8c0" stroke-width="0.4"/><rect x="50.8" y="613.2" width="3.8" height="3.2" rx="0.6" fill="#4a4f58"/><path d="M54.04 629.85 L54.76 628.04 L56.62 628.64 L56.14 630.53 L57.34 631.40 L58.99 630.36 L60.14 631.94 L58.64 633.19 L59.10 634.59 L61.04 634.72 L61.04 636.68 L59.10 636.81 L58.64 638.21 L60.14 639.46 L58.99 641.04 L57.34 640.00 L56.14 640.87 L56.62 642.76 L54.76 643.36 L54.04 641.55 L52.56 641.55 L51.84 643.36 L49.98 642.76 L50.46 640.87 L49.26 640.00 L47.61 641.04 L46.46 639.46 L47.96 638.21 L47.50 636.81 L45.56 636.68 L45.56 634.72 L47.50 634.59 L47.96 633.19 L46.46 631.94 L47.61 630.36 L49.26 631.40 L50.46 630.53 L49.98 628.64 L51.84 628.04 L52.56 629.85Z" fill="#3a66c8"/><path d="M53.21 629.34 L53.92 627.53 L55.74 628.12 L55.25 630.01 L56.40 630.84 L58.04 629.80 L59.16 631.34 L57.66 632.57 L58.10 633.93 L60.04 634.05 L60.04 635.95 L58.10 636.07 L57.66 637.43 L59.16 638.66 L58.04 640.20 L56.40 639.16 L55.25 639.99 L55.74 641.88 L53.92 642.47 L53.21 640.66 L51.79 640.66 L51.08 642.47 L49.26 641.88 L49.75 639.99 L48.60 639.16 L46.96 640.20 L45.84 638.66 L47.34 637.43 L46.90 636.07 L44.96 635.95 L44.96 634.05 L46.90 633.93 L47.34 632.57 L45.84 631.34 L46.96 629.80 L48.60 630.84 L49.75 630.01 L49.26 628.12 L51.08 627.53 L51.79 629.34Z" fill="#eef3fa" stroke="#9aa8c0" stroke-width="0.4"/><rect x="50.8" y="633.2" width="3.8" height="3.2" rx="0.6" fill="#4a4f58"/><path d="M54.04 649.85 L54.76 648.04 L56.62 648.64 L56.14 650.53 L57.34 651.40 L58.99 650.36 L60.14 651.94 L58.64 653.19 L59.10 654.59 L61.04 654.72 L61.04 656.68 L59.10 656.81 L58.64 658.21 L60.14 659.46 L58.99 661.04 L57.34 660.00 L56.14 660.87 L56.62 662.76 L54.76 663.36 L54.04 661.55 L52.56 661.55 L51.84 663.36 L49.98 662.76 L50.46 660.87 L49.26 660.00 L47.61 661.04 L46.46 659.46 L47.96 658.21 L47.50 656.81 L45.56 656.68 L45.56 654.72 L47.50 654.59 L47.96 653.19 L46.46 651.94 L47.61 650.36 L49.26 651.40 L50.46 650.53 L49.98 648.64 L51.84 648.04 L52.56 649.85Z" fill="#3a66c8"/><path d="M53.21 649.34 L53.92 647.53 L55.74 648.12 L55.25 650.01 L56.40 650.84 L58.04 649.80 L59.16 651.34 L57.66 652.57 L58.10 653.93 L60.04 654.05 L60.04 655.95 L58.10 656.07 L57.66 657.43 L59.16 658.66 L58.04 660.20 L56.40 659.16 L55.25 659.99 L55.74 661.88 L53.92 662.47 L53.21 660.66 L51.79 660.66 L51.08 662.47 L49.26 661.88 L49.75 659.99 L48.60 659.16 L46.96 660.20 L45.84 658.66 L47.34 657.43 L46.90 656.07 L44.96 655.95 L44.96 654.05 L46.90 653.93 L47.34 652.57 L45.84 651.34 L46.96 649.80 L48.60 650.84 L49.75 650.01 L49.26 648.12 L51.08 647.53 L51.79 649.34Z" fill="#eef3fa" stroke="#9aa8c0" stroke-width="0.4"/><rect x="50.8" y="653.2" width="3.8" height="3.2" rx="0.6" fill="#4a4f58"/></g></svg>
<svg style="left:400px;top:60px" width="30" height="600" viewBox="400 60 30 600"><defs><linearGradient id="thl" x1="0" x2="1"><stop offset="0" stop-color="#5e5e5e"/><stop offset="0.45" stop-color="#3c3c3c"/><stop offset="0.62" stop-color="#242424"/><stop offset="1" stop-color="#1e1e1e"/></linearGradient></defs><rect x="411" y="77" width="2" height="566" fill="#1c1c1c"/><rect x="406" y="77" width="9" height="483" rx="2.5" fill="url(#thl)"/><circle cx="412" cy="71" r="5" fill="#333"/><path d="M408.5 73.5 L415.5 73.5 L412 68.5 Z" fill="#fff"/><circle cx="412" cy="646" r="5" fill="#333"/><path d="M408.5 643.5 L415.5 643.5 L412 648.5 Z" fill="#fff"/></svg>
<svg style="left:420px;top:220px" width="15" height="580" viewBox="420 220 15 580"><rect x="426.5" y="229.30" width="2" height="3" fill="#1a1a1a"/><rect x="426.5" y="239.63" width="2" height="3" fill="#1a1a1a"/><rect x="426.5" y="249.96" width="2" height="3" fill="#1a1a1a"/><rect x="426.5" y="260.29" width="2" height="3" fill="#1a1a1a"/><rect x="426.5" y="270.62" width="2" height="3" fill="#1a1a1a"/><rect x="426.5" y="280.95" width="2" height="3" fill="#1a1a1a"/><rect x="426.5" y="291.28" width="2" height="3" fill="#1a1a1a"/><rect x="426.5" y="301.61" width="2" height="3" fill="#1a1a1a"/><rect x="426.5" y="311.94" width="2" height="3" fill="#1a1a1a"/><rect x="426.5" y="322.27" width="2" height="3" fill="#1a1a1a"/><rect x="426.5" y="332.60" width="2" height="3" fill="#1a1a1a"/><rect x="426.5" y="342.93" width="2" height="3" fill="#1a1a1a"/><rect x="426.5" y="353.26" width="2" height="3" fill="#1a1a1a"/><rect x="426.5" y="363.59" width="2" height="3" fill="#1a1a1a"/><rect x="426.5" y="373.92" width="2" height="3" fill="#1a1a1a"/><rect x="426.5" y="384.25" width="2" height="3" fill="#1a1a1a"/><rect x="426.5" y="394.58" width="2" height="3" fill="#1a1a1a"/><rect x="426.5" y="404.91" width="2" height="3" fill="#1a1a1a"/><rect x="426.5" y="415.24" width="2" height="3" fill="#1a1a1a"/><rect x="426.5" y="425.57" width="2" height="3" fill="#1a1a1a"/><rect x="426.5" y="435.90" width="2" height="3" fill="#1a1a1a"/><rect x="426.5" y="446.23" width="2" height="3" fill="#1a1a1a"/><rect x="426.5" y="456.56" width="2" height="3" fill="#1a1a1a"/><rect x="426.5" y="466.89" width="2" height="3" fill="#1a1a1a"/><rect x="426.5" y="477.22" width="2" height="3" fill="#1a1a1a"/><rect x="426.5" y="487.55" width="2" height="3" fill="#1a1a1a"/><rect x="426.5" y="497.88" width="2" height="3" fill="#1a1a1a"/><rect x="426.5" y="508.21" width="2" height="3" fill="#1a1a1a"/><rect x="426.5" y="518.54" width="2" height="3" fill="#1a1a1a"/><rect x="426.5" y="528.87" width="2" height="3" fill="#1a1a1a"/><rect x="426.5" y="539.20" width="2" height="3" fill="#1a1a1a"/><rect x="426.5" y="549.53" width="2" height="3" fill="#1a1a1a"/><rect x="426.5" y="559.86" width="2" height="3" fill="#1a1a1a"/><rect x="426.5" y="570.19" width="2" height="3" fill="#1a1a1a"/><rect x="426.5" y="580.52" width="2" height="3" fill="#1a1a1a"/><rect x="426.5" y="590.85" width="2" height="3" fill="#1a1a1a"/><rect x="426.5" y="601.18" width="2" height="3" fill="#1a1a1a"/><rect x="426.5" y="611.51" width="2" height="3" fill="#1a1a1a"/><rect x="426.5" y="621.84" width="2" height="3" fill="#1a1a1a"/><rect x="426.5" y="632.17" width="2" height="3" fill="#1a1a1a"/><rect x="426.5" y="642.50" width="2" height="3" fill="#1a1a1a"/><rect x="426.5" y="652.83" width="2" height="3" fill="#1a1a1a"/><rect x="426.5" y="663.16" width="2" height="3" fill="#1a1a1a"/><rect x="426.5" y="673.49" width="2" height="3" fill="#1a1a1a"/><rect x="426.5" y="683.82" width="2" height="3" fill="#1a1a1a"/><rect x="426.5" y="694.15" width="2" height="3" fill="#1a1a1a"/><rect x="426.5" y="704.48" width="2" height="3" fill="#1a1a1a"/><rect x="426.5" y="714.81" width="2" height="3" fill="#1a1a1a"/><rect x="426.5" y="725.14" width="2" height="3" fill="#1a1a1a"/><rect x="426.5" y="735.47" width="2" height="3" fill="#1a1a1a"/><rect x="426.5" y="745.80" width="2" height="3" fill="#1a1a1a"/><rect x="426.5" y="756.13" width="2" height="3" fill="#1a1a1a"/><rect x="426.5" y="766.46" width="2" height="3" fill="#1a1a1a"/><rect x="426.5" y="776.79" width="2" height="3" fill="#1a1a1a"/><rect x="426.5" y="787.12" width="2" height="3" fill="#1a1a1a"/></svg>
<div style="left:92px;top:672px;width:236px;height:31px;background:#3b3b3b;border-radius:6px"></div>
<svg style="left:0;top:715px" width="400" height="80" viewBox="0 715 400 80"><path d="M16 727 L28.5 727 L34.3 733 L34.3 749.3 L16 749.3 Z" fill="#f2f3f5" stroke="#707480" stroke-width="0.8"/><path d="M28.5 727 L28.5 733 L34.3 733" fill="#e0e2e8" stroke="#707480" stroke-width="0.6"/><path d="M21 746.5 L28.5 746.5 L28 744.5 L26.3 742 L25.6 737 L26.8 736 L26.8 735 A2.3 2.3 0 1 0 22.6 735 L22.6 736 L23.8 737 L23.1 742 L21.5 744.5 Z" fill="#5a5a64"/><path d="M122.5 727 L135 727 L141 733 L141 749.5 L122.5 749.5 Z" fill="#eef0f4" stroke="#50607a" stroke-width="0.8"/><path d="M135 727 L135 733 L141 733" fill="#d8dce4" stroke="#50607a" stroke-width="0.6"/><path d="M125 730.5 H137 V735 H135.8 L135 733.3 H132.8 V746 H134.2 V747.3 H127.8 V746 H129.2 V733.3 H127 L126.2 735 H125 Z" fill="#3a5a8e"/><path d="M228.5 728.3 L237.5 728.3 L241 731.8 L241 744 L228.5 744 Z" fill="#e8eaee" stroke="#6a6e78" stroke-width="0.8"/><path d="M222.6 731.5 L231.8 731.5 L235.2 735 L235.2 747.2 L222.6 747.2 Z" fill="#f4f5f7" stroke="#6a6e78" stroke-width="0.8"/><rect x="223.8" y="739" width="10.4" height="7.4" fill="#c2c6d0"/><path d="M300 729.5 L316 729.5 L316 735 L320.5 735 L320.5 748.6 L300 748.6 Z" fill="#d2d2d2"/><rect x="307" y="727.3" width="3.5" height="2.5" fill="#d2d2d2"/><g stroke="#9a2a2a" stroke-width="2.4" stroke-linecap="round"><line x1="23" y1="769" x2="40" y2="786"/><line x1="39" y1="769" x2="24" y2="786"/></g><rect x="119" y="766" width="22" height="22" fill="#c8c8c8"/><path d="M123.5 784 L129 770 L131.5 770 L137 784 L134 784 L132.7 780 L127.8 780 L126.5 784 Z M128.6 777.5 L131.9 777.5 L130.2 772.5 Z" fill="#dedede"/></svg>
<div style="left:436px;top:34px;width:1169px;height:30px;background:linear-gradient(to right,#000 0%,#000 8%,#363636 100%)"></div>
<div style="left:436px;top:64px;width:1169px;height:1px;background:#f0f0f0"></div>
<div style="left:442px;top:86px;width:26px;height:14px;background:#383838;border-radius:6px"></div>
<div style="left:474px;top:86px;width:26px;height:14px;background:#383838;border-radius:6px"></div>
<svg style="left:440px;top:84px" width="64" height="18" viewBox="440 84 64 18"><defs><radialGradient id="ng"><stop offset="0" stop-color="#1e1e1e"/><stop offset="1" stop-color="#3a3a3a" stop-opacity="0"/></radialGradient></defs><circle cx="455.5" cy="93.5" r="6" fill="url(#ng)"/><circle cx="487.5" cy="93.5" r="6" fill="url(#ng)"/><path d="M452.6 92 L458.3 92 L455.5 96.2 Z" fill="#fff"/><path d="M485.8 90.8 L485.8 96.3 L490.3 93.5 Z" fill="#fff"/></svg>
<div style="left:579px;top:77px;width:194px;height:31px;background:#3b3b3b;border-radius:6px"></div>
<div style="left:777px;top:77px;width:155px;height:31px;background:#000;border-radius:6px"></div>
<div style="left:937px;top:78px;width:155px;height:29px;background:#6f7074;border-radius:5px"></div>
<svg style="left:442px;top:138px" width="16" height="16" viewBox="442 138 16 16"><circle cx="450" cy="146" r="7" fill="#2e2e2e"/><path d="M445.6 143.7 L454.4 143.7 L450 149.2 Z" fill="#fff"/></svg>
<div style="left:617px;top:146px;width:962px;height:1px;background:#f0f0f0"></div>
<svg style="left:442px;top:454px" width="16" height="16" viewBox="442 454 16 16"><circle cx="450" cy="462" r="7" fill="#2e2e2e"/><path d="M445.6 459.7 L454.4 459.7 L450 465.2 Z" fill="#fff"/></svg>
<div style="left:675px;top:462px;width:904px;height:1px;background:#f0f0f0"></div>
<svg style="left:442px;top:532px" width="16" height="16" viewBox="442 532 16 16"><circle cx="450" cy="540" r="7" fill="#2e2e2e"/><path d="M445.6 537.7 L454.4 537.7 L450 543.2 Z" fill="#fff"/></svg>
<div style="left:686px;top:540px;width:893px;height:1px;background:#f0f0f0"></div>
<svg style="left:442px;top:683px" width="16" height="16" viewBox="442 683 16 16"><circle cx="450" cy="691" r="7" fill="#2e2e2e"/><path d="M445.6 688.7 L454.4 688.7 L450 694.2 Z" fill="#fff"/></svg>
<div style="left:565px;top:691px;width:1014px;height:1px;background:#f0f0f0"></div>
<div style="left:633px;top:208px;width:141px;height:15px;background:#fff"></div>
<svg style="left:760px;top:210px" width="14" height="10" viewBox="760 210 14 10"><path d="M761.5 213.0 L772.5 213.0 L767 218.5 Z" fill="#000"/></svg>
<div style="left:633px;top:232px;width:141px;height:17px;background:#fff"></div>
<svg style="left:760px;top:235px" width="14" height="10" viewBox="760 235 14 10"><path d="M761.5 238.0 L772.5 238.0 L767 243.5 Z" fill="#000"/></svg>
<svg style="left:782.5px;top:232px" width="16" height="16" viewBox="0 0 16 16"><defs><linearGradient id="hg" x1="0" y1="0" x2="0.3" y2="1"><stop offset="0" stop-color="#c8d0da"/><stop offset="1" stop-color="#7d8c9e"/></linearGradient></defs><circle cx="8" cy="8" r="6.6" fill="url(#hg)" stroke="#b4bcc6" stroke-width="0.9"/><path d="M6.5 6.6 Q6.5 5 8.1 5 Q9.7 5 9.7 6.4 Q9.7 7.3 8.6 7.8 L8.4 8.8" fill="none" stroke="#f0f3f7" stroke-width="1.6" stroke-linecap="round"/><circle cx="8.3" cy="10.8" r="1" fill="#f0f3f7"/></svg>
<div style="left:844px;top:230px;width:77px;height:20px;background:#fff"></div>
<div style="left:931px;top:232px;width:50px;height:17px;background:#fff"></div>
<svg style="left:967px;top:235px" width="14" height="10" viewBox="967 235 14 10"><path d="M968.5 238.0 L979.5 238.0 L974 243.5 Z" fill="#000"/></svg>
<div style="left:995px;top:235px;width:12px;height:12px;background:#fff;border:1px solid #9a9a9a;box-sizing:border-box"></div>
<svg style="left:1187px;top:232px" width="16" height="16" viewBox="0 0 16 16"><defs><linearGradient id="hg" x1="0" y1="0" x2="0.3" y2="1"><stop offset="0" stop-color="#c8d0da"/><stop offset="1" stop-color="#7d8c9e"/></linearGradient></defs><circle cx="8" cy="8" r="6.6" fill="url(#hg)" stroke="#b4bcc6" stroke-width="0.9"/><path d="M6.5 6.6 Q6.5 5 8.1 5 Q9.7 5 9.7 6.4 Q9.7 7.3 8.6 7.8 L8.4 8.8" fill="none" stroke="#f0f3f7" stroke-width="1.6" stroke-linecap="round"/><circle cx="8.3" cy="10.8" r="1" fill="#f0f3f7"/></svg>
<div style="left:633px;top:256px;width:141px;height:17px;background:#fff"></div>
<svg style="left:760px;top:259px" width="14" height="10" viewBox="760 259 14 10"><path d="M761.5 262.0 L772.5 262.0 L767 267.5 Z" fill="#000"/></svg>
<svg style="left:782.5px;top:256.5px" width="16" height="16" viewBox="0 0 16 16"><defs><linearGradient id="hg" x1="0" y1="0" x2="0.3" y2="1"><stop offset="0" stop-color="#c8d0da"/><stop offset="1" stop-color="#7d8c9e"/></linearGradient></defs><circle cx="8" cy="8" r="6.6" fill="url(#hg)" stroke="#b4bcc6" stroke-width="0.9"/><path d="M6.5 6.6 Q6.5 5 8.1 5 Q9.7 5 9.7 6.4 Q9.7 7.3 8.6 7.8 L8.4 8.8" fill="none" stroke="#f0f3f7" stroke-width="1.6" stroke-linecap="round"/><circle cx="8.3" cy="10.8" r="1" fill="#f0f3f7"/></svg>
<div style="left:844px;top:255px;width:77px;height:20px;background:#666666"></div>
<div style="left:931px;top:256px;width:50px;height:17px;background:#666666"></div>
<svg style="left:967px;top:259px" width="14" height="10" viewBox="967 259 14 10"><path d="M968.5 262.0 L979.5 262.0 L974 267.5 Z" fill="#444"/></svg>
<div style="left:633px;top:279px;width:141px;height:19px;background:#fff"></div>
<div style="left:784px;top:280px;width:46px;height:17px;background:#fff"></div>
<svg style="left:816px;top:283px" width="14" height="10" viewBox="816 283 14 10"><path d="M817.5 286.0 L828.5 286.0 L823 291.5 Z" fill="#000"/></svg>
<div style="left:438px;top:303px;width:595px;height:147px;border:8px solid #ffb300;box-sizing:border-box"></div>
<div style="left:652px;top:345px;width:141px;height:17px;background:#fff"></div>
<svg style="left:779px;top:348px" width="14" height="10" viewBox="779 348 14 10"><path d="M780.5 351.0 L791.5 351.0 L786 356.5 Z" fill="#000"/></svg>
<svg style="left:801.6px;top:345.5px" width="16" height="16" viewBox="0 0 16 16"><defs><linearGradient id="hg" x1="0" y1="0" x2="0.3" y2="1"><stop offset="0" stop-color="#c8d0da"/><stop offset="1" stop-color="#7d8c9e"/></linearGradient></defs><circle cx="8" cy="8" r="6.6" fill="url(#hg)" stroke="#b4bcc6" stroke-width="0.9"/><path d="M6.5 6.6 Q6.5 5 8.1 5 Q9.7 5 9.7 6.4 Q9.7 7.3 8.6 7.8 L8.4 8.8" fill="none" stroke="#f0f3f7" stroke-width="1.6" stroke-linecap="round"/><circle cx="8.3" cy="10.8" r="1" fill="#f0f3f7"/></svg>
<div style="left:863px;top:344px;width:77px;height:20px;background:#666666"></div>
<div style="left:950px;top:345px;width:50px;height:17px;background:#666666"></div>
<svg style="left:986px;top:348px" width="14" height="10" viewBox="986 348 14 10"><path d="M987.5 351.0 L998.5 351.0 L993 356.5 Z" fill="#444"/></svg>
<div style="left:652px;top:369px;width:141px;height:17px;background:#fff"></div>
<svg style="left:779px;top:372px" width="14" height="10" viewBox="779 372 14 10"><path d="M780.5 375.0 L791.5 375.0 L786 380.5 Z" fill="#000"/></svg>
<svg style="left:801.6px;top:369.5px" width="16" height="16" viewBox="0 0 16 16"><defs><linearGradient id="hg" x1="0" y1="0" x2="0.3" y2="1"><stop offset="0" stop-color="#c8d0da"/><stop offset="1" stop-color="#7d8c9e"/></linearGradient></defs><circle cx="8" cy="8" r="6.6" fill="url(#hg)" stroke="#b4bcc6" stroke-width="0.9"/><path d="M6.5 6.6 Q6.5 5 8.1 5 Q9.7 5 9.7 6.4 Q9.7 7.3 8.6 7.8 L8.4 8.8" fill="none" stroke="#f0f3f7" stroke-width="1.6" stroke-linecap="round"/><circle cx="8.3" cy="10.8" r="1" fill="#f0f3f7"/></svg>
<div style="left:863px;top:368px;width:77px;height:20px;background:#666666"></div>
<div style="left:950px;top:369px;width:50px;height:17px;background:#666666"></div>
<svg style="left:986px;top:372px" width="14" height="10" viewBox="986 372 14 10"><path d="M987.5 375.0 L998.5 375.0 L993 380.5 Z" fill="#444"/></svg>
<div style="left:652px;top:393px;width:141px;height:17px;background:#fff"></div>
<svg style="left:779px;top:396px" width="14" height="10" viewBox="779 396 14 10"><path d="M780.5 399.0 L791.5 399.0 L786 404.5 Z" fill="#000"/></svg>
<svg style="left:801.6px;top:393.5px" width="16" height="16" viewBox="0 0 16 16"><defs><linearGradient id="hg" x1="0" y1="0" x2="0.3" y2="1"><stop offset="0" stop-color="#c8d0da"/><stop offset="1" stop-color="#7d8c9e"/></linearGradient></defs><circle cx="8" cy="8" r="6.6" fill="url(#hg)" stroke="#b4bcc6" stroke-width="0.9"/><path d="M6.5 6.6 Q6.5 5 8.1 5 Q9.7 5 9.7 6.4 Q9.7 7.3 8.6 7.8 L8.4 8.8" fill="none" stroke="#f0f3f7" stroke-width="1.6" stroke-linecap="round"/><circle cx="8.3" cy="10.8" r="1" fill="#f0f3f7"/></svg>
<div style="left:863px;top:392px;width:77px;height:20px;background:#666666"></div>
<div style="left:950px;top:393px;width:50px;height:17px;background:#666666"></div>
<svg style="left:986px;top:396px" width="14" height="10" viewBox="986 396 14 10"><path d="M987.5 399.0 L998.5 399.0 L993 404.5 Z" fill="#444"/></svg>
<div style="left:652px;top:416px;width:141px;height:20px;background:#fff"></div>
<div style="left:803px;top:417px;width:46px;height:16px;background:#fff"></div>
<svg style="left:835px;top:420px" width="14" height="10" viewBox="835 420 14 10"><path d="M836.5 422.5 L847.5 422.5 L842 428.0 Z" fill="#000"/></svg>
<div style="left:571px;top:477px;width:77px;height:15px;background:#fff"></div>
<svg style="left:634px;top:479px" width="14" height="10" viewBox="634 479 14 10"><path d="M635.5 482.0 L646.5 482.0 L641 487.5 Z" fill="#000"/></svg>
<svg style="left:656.8px;top:476.5px" width="16" height="16" viewBox="0 0 16 16"><defs><linearGradient id="hg" x1="0" y1="0" x2="0.3" y2="1"><stop offset="0" stop-color="#c8d0da"/><stop offset="1" stop-color="#7d8c9e"/></linearGradient></defs><circle cx="8" cy="8" r="6.6" fill="url(#hg)" stroke="#b4bcc6" stroke-width="0.9"/><path d="M6.5 6.6 Q6.5 5 8.1 5 Q9.7 5 9.7 6.4 Q9.7 7.3 8.6 7.8 L8.4 8.8" fill="none" stroke="#f0f3f7" stroke-width="1.6" stroke-linecap="round"/><circle cx="8.3" cy="10.8" r="1" fill="#f0f3f7"/></svg>
<div style="left:571px;top:499px;width:77px;height:20px;background:#666666"></div>
<div style="left:658px;top:500px;width:46px;height:17px;background:#666666"></div>
<svg style="left:690px;top:503px" width="14" height="10" viewBox="690 503 14 10"><path d="M691.5 506.0 L702.5 506.0 L697 511.5 Z" fill="#444"/></svg>
<svg style="left:712.8px;top:501.3px" width="16" height="16" viewBox="0 0 16 16"><defs><linearGradient id="hg" x1="0" y1="0" x2="0.3" y2="1"><stop offset="0" stop-color="#c8d0da"/><stop offset="1" stop-color="#7d8c9e"/></linearGradient></defs><circle cx="8" cy="8" r="6.6" fill="url(#hg)" stroke="#b4bcc6" stroke-width="0.9"/><path d="M6.5 6.6 Q6.5 5 8.1 5 Q9.7 5 9.7 6.4 Q9.7 7.3 8.6 7.8 L8.4 8.8" fill="none" stroke="#f0f3f7" stroke-width="1.6" stroke-linecap="round"/><circle cx="8.3" cy="10.8" r="1" fill="#f0f3f7"/></svg>
<div style="left:763px;top:563px;width:47px;height:20px;background:#fff"></div>
<div style="left:820px;top:564px;width:73px;height:17px;background:#666666"></div>
<svg style="left:879px;top:567px" width="14" height="10" viewBox="879 567 14 10"><path d="M880.5 570.0 L891.5 570.0 L886 575.5 Z" fill="#444"/></svg>
<svg style="left:908.6px;top:564.6px" width="16" height="16" viewBox="0 0 16 16"><defs><linearGradient id="hg" x1="0" y1="0" x2="0.3" y2="1"><stop offset="0" stop-color="#c8d0da"/><stop offset="1" stop-color="#7d8c9e"/></linearGradient></defs><circle cx="8" cy="8" r="6.6" fill="url(#hg)" stroke="#b4bcc6" stroke-width="0.9"/><path d="M6.5 6.6 Q6.5 5 8.1 5 Q9.7 5 9.7 6.4 Q9.7 7.3 8.6 7.8 L8.4 8.8" fill="none" stroke="#f0f3f7" stroke-width="1.6" stroke-linecap="round"/><circle cx="8.3" cy="10.8" r="1" fill="#f0f3f7"/></svg>
<div style="left:763px;top:597px;width:136px;height:20px;background:#fff"></div>
<svg style="left:885px;top:597px" width="14" height="20" viewBox="885 597 14 20"><path d="M886.5 606.0 L897.5 606.0 L892 600.0 Z" fill="#000"/><path d="M886.5 608.5 L897.5 608.5 L892 614.0 Z" fill="#000"/></svg>
<svg style="left:908.6px;top:598.8px" width="16" height="16" viewBox="0 0 16 16"><defs><linearGradient id="hg" x1="0" y1="0" x2="0.3" y2="1"><stop offset="0" stop-color="#c8d0da"/><stop offset="1" stop-color="#7d8c9e"/></linearGradient></defs><circle cx="8" cy="8" r="6.6" fill="url(#hg)" stroke="#b4bcc6" stroke-width="0.9"/><path d="M6.5 6.6 Q6.5 5 8.1 5 Q9.7 5 9.7 6.4 Q9.7 7.3 8.6 7.8 L8.4 8.8" fill="none" stroke="#f0f3f7" stroke-width="1.6" stroke-linecap="round"/><circle cx="8.3" cy="10.8" r="1" fill="#f0f3f7"/></svg>
<div style="left:763px;top:621px;width:137px;height:20px;background:#fff"></div>
<svg style="left:908.6px;top:623px" width="16" height="16" viewBox="0 0 16 16"><defs><linearGradient id="hg" x1="0" y1="0" x2="0.3" y2="1"><stop offset="0" stop-color="#c8d0da"/><stop offset="1" stop-color="#7d8c9e"/></linearGradient></defs><circle cx="8" cy="8" r="6.6" fill="url(#hg)" stroke="#b4bcc6" stroke-width="0.9"/><path d="M6.5 6.6 Q6.5 5 8.1 5 Q9.7 5 9.7 6.4 Q9.7 7.3 8.6 7.8 L8.4 8.8" fill="none" stroke="#f0f3f7" stroke-width="1.6" stroke-linecap="round"/><circle cx="8.3" cy="10.8" r="1" fill="#f0f3f7"/></svg>
<div style="left:763px;top:645px;width:136px;height:20px;background:#fff"></div>
<svg style="left:885px;top:645px" width="14" height="20" viewBox="885 645 14 20"><path d="M886.5 654.0 L897.5 654.0 L892 648.0 Z" fill="#000"/><path d="M886.5 656.5 L897.5 656.5 L892 662.0 Z" fill="#000"/></svg>
<svg style="left:908.6px;top:646.7px" width="16" height="16" viewBox="0 0 16 16"><defs><linearGradient id="hg" x1="0" y1="0" x2="0.3" y2="1"><stop offset="0" stop-color="#c8d0da"/><stop offset="1" stop-color="#7d8c9e"/></linearGradient></defs><circle cx="8" cy="8" r="6.6" fill="url(#hg)" stroke="#b4bcc6" stroke-width="0.9"/><path d="M6.5 6.6 Q6.5 5 8.1 5 Q9.7 5 9.7 6.4 Q9.7 7.3 8.6 7.8 L8.4 8.8" fill="none" stroke="#f0f3f7" stroke-width="1.6" stroke-linecap="round"/><circle cx="8.3" cy="10.8" r="1" fill="#f0f3f7"/></svg>
<svg style="left:566.7px;top:705.6px" width="16" height="16" viewBox="0 0 16 16"><defs><linearGradient id="hg" x1="0" y1="0" x2="0.3" y2="1"><stop offset="0" stop-color="#c8d0da"/><stop offset="1" stop-color="#7d8c9e"/></linearGradient></defs><circle cx="8" cy="8" r="6.6" fill="url(#hg)" stroke="#b4bcc6" stroke-width="0.9"/><path d="M6.5 6.6 Q6.5 5 8.1 5 Q9.7 5 9.7 6.4 Q9.7 7.3 8.6 7.8 L8.4 8.8" fill="none" stroke="#f0f3f7" stroke-width="1.6" stroke-linecap="round"/><circle cx="8.3" cy="10.8" r="1" fill="#f0f3f7"/></svg>
<div style="left:592px;top:705px;width:129px;height:17px;background:#fff"></div>
<svg style="left:707px;top:708px" width="14" height="10" viewBox="707 708 14 10"><path d="M708.5 711.0 L719.5 711.0 L714 716.5 Z" fill="#000"/></svg>
<div style="left:592px;top:729px;width:129px;height:17px;background:#fff"></div>
<svg style="left:707px;top:732px" width="14" height="10" viewBox="707 732 14 10"><path d="M708.5 735.0 L719.5 735.0 L714 740.5 Z" fill="#000"/></svg>
<div style="left:456px;top:765px;width:12px;height:12px;background:#fff;border:1px solid #9a9a9a;box-sizing:border-box"></div>
<svg style="left:1588px;top:118px" width="18" height="675" viewBox="1588 118 18 675"><defs><linearGradient id="thr" x1="0" x2="1"><stop offset="0" stop-color="#4a4a4a"/><stop offset="0.4" stop-color="#2e2e2e"/><stop offset="1" stop-color="#1c1c1c"/></linearGradient></defs><rect x="1598" y="134" width="2" height="641" fill="#1c1c1c"/><rect x="1596.5" y="407" width="6.5" height="176" rx="3" fill="url(#thr)"/><circle cx="1599.3" cy="127.5" r="5.3" fill="#333"/><path d="M1595.8 130 L1602.8 130 L1599.3 124.8 Z" fill="#fff"/><circle cx="1599.3" cy="781" r="5.3" fill="#333"/><path d="M1595.8 778.5 L1602.8 778.5 L1599.3 783.8 Z" fill="#fff"/></svg>
<div style="left:674px;top:813px;width:79px;height:27px;background:#3b3b3b;border-radius:6px"></div>
<div style="left:764px;top:813px;width:79px;height:27px;background:#3b3b3b;border-radius:6px"></div>
<div style="left:854px;top:813px;width:79px;height:27px;background:#3b3b3b;border-radius:6px"></div>
<div class="t" style="left:21.00px;top:10px;letter-spacing:0.116px;color:#eeeeee">Trader Workstation Configuration</div>
<div class="t" style="left:11.00px;top:41px;letter-spacing:0.571px;color:#9a9a9a">enter filter text here</div>
<div class="t" style="left:27.30px;top:67px;letter-spacing:0.375px;color:#f6f6f6">Configuration</div>
<div class="t" style="left:43.20px;top:87px;letter-spacing:0.267px;color:#f6f6f6">General</div>
<div class="t" style="left:43.20px;top:107px;letter-spacing:0.446px;color:#f6f6f6">Export Reports</div>
<div class="t" style="left:43.20px;top:127px;letter-spacing:0.833px;color:#f6f6f6">Hotkeys</div>
<div class="t" style="left:43.20px;top:147px;letter-spacing:0.292px;color:#f6f6f6">Lock and Exit</div>
<div class="t" style="left:43.20px;top:167px;letter-spacing:0.000px;color:#f6f6f6">Messages</div>
<div class="t" style="left:43.20px;top:187px;letter-spacing:0.250px;color:#f6f6f6">Sound Manager</div>
<div class="t" style="left:44.20px;top:207px;letter-spacing:0.261px;color:#f6f6f6">Volatility and Analytics</div>
<div class="t" style="left:44.20px;top:227px;letter-spacing:-0.350px;color:#f6f6f6">API</div>
<div class="t" style="left:43.20px;top:247px;letter-spacing:-0.167px;color:#f6f6f6">Display</div>
<div class="t" style="left:44.20px;top:267px;letter-spacing:0.250px;color:#f6f6f6">Trading Tools</div>
<div class="t" style="left:43.20px;top:287px;letter-spacing:0.713px;color:#f6f6f6">Information Tools</div>
<div class="t" style="left:43.20px;top:307px;letter-spacing:0.440px;color:#f6f6f6">Charts</div>
<div class="t" style="left:43.20px;top:327px;letter-spacing:0.200px;color:#f6f6f6">Orders</div>
<div class="t" style="left:43.20px;top:347px;letter-spacing:0.133px;color:#f6f6f6">Presets</div>
<div class="t" style="left:67.50px;top:367px;letter-spacing:0.600px;color:#f6f6f6">Stocks</div>
<div class="t" style="left:67.50px;top:387px;letter-spacing:0.456px;color:#f6f6f6">Contract For Diff</div>
<div class="t" style="left:67.50px;top:407px;letter-spacing:0.333px;color:#f6f6f6">Options</div>
<div class="t" style="left:67.50px;top:427px;letter-spacing:0.385px;color:#f6f6f6">Future Options</div>
<div class="t" style="left:68.50px;top:447px;letter-spacing:0.429px;color:#f6f6f6">Warrants</div>
<div class="t" style="left:67.50px;top:467px;letter-spacing:0.389px;color:#f6f6f6">Structured Products</div>
<div class="t" style="left:67.50px;top:487px;letter-spacing:0.333px;color:#f6f6f6">Futures</div>
<div class="t" style="left:67.50px;top:507px;letter-spacing:0.800px;color:#f6f6f6">Combos</div>
<div class="t" style="left:67.50px;top:527px;letter-spacing:0.450px;color:#f6f6f6">Forex</div>
<div class="t" style="left:67.50px;top:547px;letter-spacing:0.300px;color:#f6f6f6">Indexes</div>
<div class="t" style="left:67.50px;top:567px;letter-spacing:0.200px;color:#f6f6f6">Bonds</div>
<div class="t" style="left:67.50px;top:587px;letter-spacing:-0.500px;color:#f6f6f6">Bills</div>
<div class="t" style="left:67.50px;top:607px;letter-spacing:0.091px;color:#f6f6f6">Mutual Funds</div>
<div class="t" style="left:67.50px;top:627px;letter-spacing:0.725px;color:#f6f6f6">Stock Borrow/Loan</div>
<div class="t" style="left:67.50px;top:647px;letter-spacing:0.400px;color:#f6f6f6">Commodities</div>
<div class="t" style="left:109.40px;top:679px;letter-spacing:0.420px;color:#f6f6f6">Some options are hidden...</div>
<div class="t" style="left:42.70px;top:729px;letter-spacing:0.388px;color:#f6f6f6">Preset...</div>
<div class="t" style="left:150.40px;top:729px;letter-spacing:0.438px;color:#f6f6f6">Ticker...</div>
<div class="t" style="left:247.60px;top:730px;letter-spacing:0.700px;color:#f6f6f6">Copy</div>
<div class="t" style="left:326.00px;top:730px;letter-spacing:0.050px;color:#8a8a8a">Paste</div>
<div class="t" style="left:46.90px;top:769px;letter-spacing:0.140px;color:#f6f6f6">Delete</div>
<div class="t" style="left:145.50px;top:769px;letter-spacing:0.200px;color:#7a7a7a">Rename</div>
<div class="t" style="left:446.00px;top:41px;letter-spacing:0.200px;color:#ffffff;font-weight:bold;font-size:17px">Presets - Stocks</div>
<div class="t" style="left:530.80px;top:85px;letter-spacing:0.667px;color:#f6f6f6">Show</div>
<div class="t" style="left:596.40px;top:83px;letter-spacing:0.190px;color:#f6f6f6">Overridden fields only</div>
<div class="t" style="left:795.00px;top:83px;letter-spacing:-0.076px;color:#f6f6f6">All enabled fields</div>
<div class="t" style="left:954.00px;top:83px;letter-spacing:-0.011px;color:#f6f6f6">All possible fields</div>
<div class="t" style="left:461.60px;top:137px;letter-spacing:0.356px;color:#f6f6f6">Attached Stop Order</div>
<div class="t" style="left:460.60px;top:454px;letter-spacing:0.146px;color:#f6f6f6">Hedge and Pair Trader Order</div>
<div class="t" style="left:460.60px;top:531px;letter-spacing:0.333px;color:#f6f6f6">For orders routed to IBKRATS</div>
<div class="t" style="left:460.60px;top:683px;letter-spacing:0.000px;color:#f6f6f6">Miscellaneous</div>
<div class="t" style="left:452.80px;top:160px;letter-spacing:0.394px;color:#f6f6f6">When a Stop type is selected an attached order is created automatically.</div>
<div class="t" style="left:452.80px;top:182px;letter-spacing:0.316px;color:#f6f6f6">Values entered are for parent Buy orders and will be flipped for parent Sell orders.</div>
<div class="t" style="left:452.50px;top:207px;letter-spacing:0.570px;color:#f6f6f6">Auto-Attach Stop Type</div>
<div class="t" style="left:634.00px;top:207px;letter-spacing:0.233px;color:#000">None</div>
<div class="t" style="left:451.30px;top:231px;letter-spacing:0.267px;color:#f6f6f6">Stop Price</div>
<div class="t" style="left:634.00px;top:232px;letter-spacing:0.182px;color:#000">Parent Order</div>
<div class="t" style="left:808.00px;top:231px;letter-spacing:1.750px;color:#f6f6f6;font-size:18px">+/-</div>
<div class="t" style="left:874.60px;top:231px;letter-spacing:1.350px;color:#000">-1.00</div>
<div class="t" style="left:932.00px;top:232px;letter-spacing:0.750px;color:#000">amt</div>
<div class="t" style="left:1016.30px;top:231px;letter-spacing:0.510px;color:#f6f6f6">Apply offset to parent</div>
<div class="t" style="left:451.30px;top:256px;letter-spacing:0.493px;color:#f6f6f6">Stop-limit price</div>
<div class="t" style="left:634.00px;top:256px;letter-spacing:0.233px;color:#000">None</div>
<div class="t" style="left:808.00px;top:256px;letter-spacing:1.750px;color:#f6f6f6;font-size:18px">+/-</div>
<div class="t" style="left:882.70px;top:256px;letter-spacing:0.767px;color:#afafaf">0.00</div>
<div class="t" style="left:932.00px;top:256px;letter-spacing:0.750px;color:#afafaf">amt</div>
<div class="t" style="left:452.30px;top:280px;letter-spacing:0.271px;color:#f6f6f6">Trailing amount</div>
<div class="t" style="left:785.00px;top:280px;letter-spacing:0.750px;color:#000">amt</div>
<div class="t" style="left:457.40px;top:320px;letter-spacing:0.026px;color:#ffffff;font-weight:bold;font-size:17px">Adjusted Stop Fields</div>
<div class="t" style="left:457.40px;top:345px;letter-spacing:0.157px;color:#f6f6f6">Adjusted Trigger Price</div>
<div class="t" style="left:653.00px;top:345px;letter-spacing:0.233px;color:#000">None</div>
<div class="t" style="left:827.00px;top:345px;letter-spacing:1.750px;color:#f6f6f6;font-size:18px">+/-</div>
<div class="t" style="left:901.20px;top:345px;letter-spacing:0.933px;color:#afafaf">1.00</div>
<div class="t" style="left:951.00px;top:345px;letter-spacing:0.750px;color:#afafaf">amt</div>
<div class="t" style="left:457.40px;top:369px;letter-spacing:0.233px;color:#f6f6f6">Adjusted Stop Price</div>
<div class="t" style="left:653.00px;top:369px;letter-spacing:0.233px;color:#000">None</div>
<div class="t" style="left:827.00px;top:369px;letter-spacing:1.750px;color:#f6f6f6;font-size:18px">+/-</div>
<div class="t" style="left:901.20px;top:369px;letter-spacing:0.933px;color:#afafaf">1.00</div>
<div class="t" style="left:951.00px;top:369px;letter-spacing:0.750px;color:#afafaf">amt</div>
<div class="t" style="left:457.40px;top:393px;letter-spacing:0.263px;color:#f6f6f6">Adjusted Stop Limit Price</div>
<div class="t" style="left:653.00px;top:393px;letter-spacing:0.233px;color:#000">None</div>
<div class="t" style="left:827.00px;top:393px;letter-spacing:1.750px;color:#f6f6f6;font-size:18px">+/-</div>
<div class="t" style="left:901.70px;top:393px;letter-spacing:0.767px;color:#afafaf">0.00</div>
<div class="t" style="left:951.00px;top:393px;letter-spacing:0.750px;color:#afafaf">amt</div>
<div class="t" style="left:457.40px;top:417px;letter-spacing:0.317px;color:#f6f6f6">Adjusted Trailing Amount</div>
<div class="t" style="left:804.00px;top:416px;letter-spacing:0.750px;color:#000">amt</div>
<div class="t" style="left:451.50px;top:476px;letter-spacing:0.478px;color:#f6f6f6">Order Type</div>
<div class="t" style="left:572.00px;top:476px;letter-spacing:-1.000px;color:#000">MKT</div>
<div class="t" style="left:451.50px;top:500px;letter-spacing:0.667px;color:#afafaf">Offset Amount</div>
<div class="t" style="left:609.70px;top:500px;letter-spacing:0.767px;color:#afafaf">0.01</div>
<div class="t" style="left:659.00px;top:500px;letter-spacing:0.750px;color:#afafaf">amt</div>
<div class="t" style="left:451.50px;top:554px;letter-spacing:0.314px;color:#f6f6f6">Reroute to SMART if the order</div>
<div class="t" style="left:451.50px;top:574px;letter-spacing:0.357px;color:#f6f6f6">does not trade on IBKRATS after</div>
<div class="t" style="left:821.00px;top:564px;letter-spacing:0.167px;color:#afafaf">Minutes</div>
<div class="t" style="left:451.50px;top:598px;letter-spacing:-0.029px;color:#f6f6f6">PEGMID or PEGBEST offset difference</div>
<div class="t" style="left:837.00px;top:598px;letter-spacing:0.750px;color:#000">0.005</div>
<div class="t" style="left:451.50px;top:622px;letter-spacing:0.333px;color:#f6f6f6">Minimum Competing Size</div>
<div class="t" style="left:866.70px;top:622px;letter-spacing:1.150px;color:#000">100</div>
<div class="t" style="left:451.50px;top:646px;letter-spacing:0.487px;color:#f6f6f6">Compete against best bid or offer Offset</div>
<div class="t" style="left:847.10px;top:646px;letter-spacing:0.633px;color:#000">0.02</div>
<div class="t" style="left:452.50px;top:705px;letter-spacing:0.277px;color:#f6f6f6">Trigger Method</div>
<div class="t" style="left:593.00px;top:705px;letter-spacing:0.217px;color:#000">Default</div>
<div class="t" style="left:451.50px;top:729px;letter-spacing:0.311px;color:#f6f6f6">Order Ref.</div>
<div class="t" style="left:476.30px;top:761px;letter-spacing:0.350px;color:#f6f6f6">Post-Only</div>
<div class="t" style="left:704.30px;top:818px;letter-spacing:-1.000px;color:#f6f6f6;font-size:13.5px">OK</div>
<div class="t" style="left:786.30px;top:818px;letter-spacing:0.250px;color:#f6f6f6;font-size:13.5px">Apply</div>
<div class="t" style="left:871.30px;top:818px;letter-spacing:0.740px;color:#f6f6f6;font-size:13.5px">Cancel</div>
<div style="left:2px;top:652px;width:404px;height:18px;background:#575757"></div>
</body></html>
